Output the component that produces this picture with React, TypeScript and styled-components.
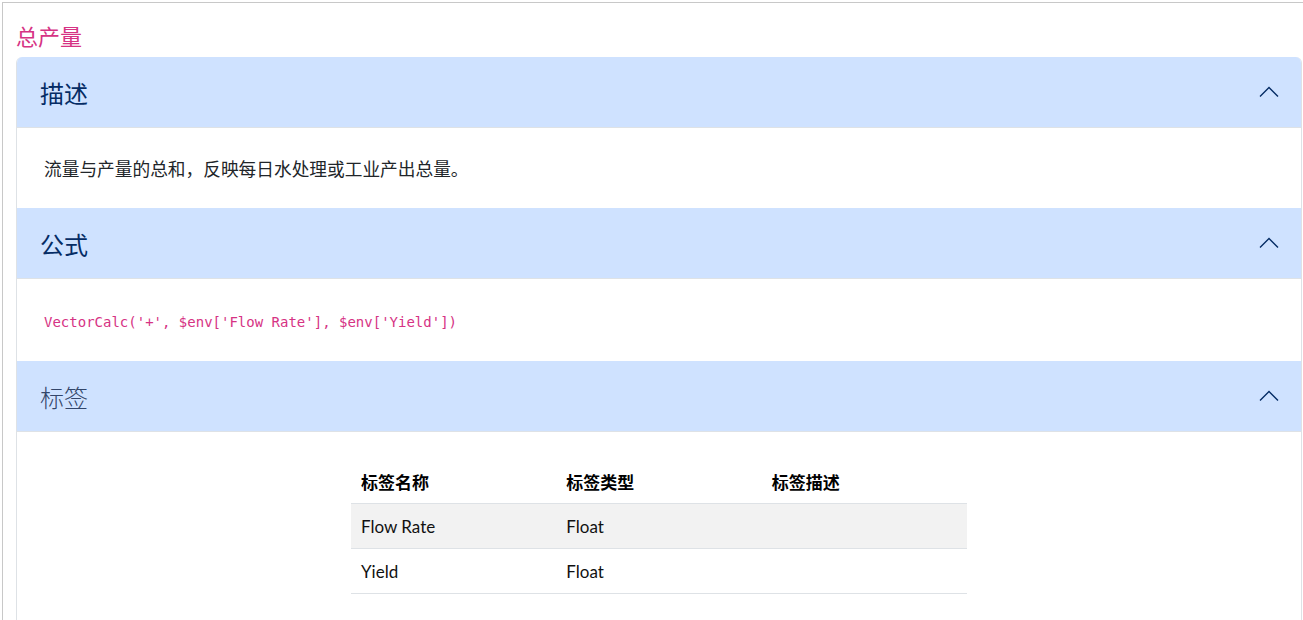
import React from 'react';
import styled, { createGlobalStyle } from 'styled-components';

const GlobalStyle = createGlobalStyle`
  html, body {
    margin: 0;
    padding: 0;
    background: #ffffff;
    overflow: hidden;
  }
  body {
    font-family: "Noto Sans", "Noto Sans CJK SC", sans-serif;
  }
`;

const Frame = styled.div`
  margin: 2px 0 0 2px;
  border-top: 1px solid #c8c8c8;
  border-left: 1px solid #c8c8c8;
  padding: 0 0 0 13px;
  min-height: 640px;
  box-sizing: border-box;
`;

const PageTitle = styled.h2`
  margin: 0;
  padding: 19px 0 8px;
  font-size: 22px;
  line-height: 27px;
  font-weight: 400;
  color: #d63384;
  font-family: "Noto Sans CJK SC", sans-serif;
`;

const Accordion = styled.div`
  width: 1284px;
  border: 1px solid #dee2e6;
  border-top: none;
  border-radius: 6px 6px 0 0;
  overflow: hidden;
`;

const Item = styled.section`
  display: flex;
  flex-direction: column;
`;

const Header = styled.button<{ $muted?: boolean }>`
  display: flex;
  align-items: center;
  justify-content: space-between;
  box-sizing: border-box;
  height: 71px;
  padding: 0 22px 0 23px;
  border: none;
  border-bottom: 1px solid #dee2e6;
  background: #cfe2ff;
  color: ${({ $muted }) => ($muted ? '#33466a' : '#052c65')};
  font-family: "Noto Sans CJK SC", sans-serif;
  font-size: 24px;
  font-weight: ${({ $muted }) => ($muted ? 300 : 400)};
  text-align: left;
  cursor: pointer;
`;

const Body = styled.div<{ $pad?: string }>`
  padding: ${({ $pad }) => $pad || '28px 27px'};
  border-bottom: 1px solid #dee2e6;
  &:last-child {
    border-bottom: none;
  }
`;

const Text = styled.p`
  margin: 0;
  font-size: 17.7px;
  line-height: 24px;
  color: #212529;
  font-family: "Noto Sans CJK SC", sans-serif;
`;

const Code = styled.code`
  display: block;
  font-family: "DejaVu Sans Mono", "Liberation Mono", monospace;
  font-size: 14px;
  line-height: 24px;
  color: #d63384;
`;

const Table = styled.table`
  width: 616px;
  margin: 0 auto 40px;
  border-collapse: collapse;
  table-layout: fixed;
`;

const Th = styled.th`
  text-align: left;
  padding: 0 10px;
  height: 43px;
  font-family: "Noto Sans CJK SC", sans-serif;
  font-size: 17px;
  font-weight: 700;
  color: #000;
  border-bottom: 1px solid #dee2e6;
`;

const Row = styled.tr<{ $striped?: boolean }>`
  background: ${({ $striped }) => ($striped ? '#f2f2f2' : '#ffffff')};
`;

const Td = styled.td`
  padding: 0 10px;
  height: 44px;
  font-family: Lato, "Noto Sans", sans-serif;
  font-size: 17px;
  color: #111;
  border-bottom: 1px solid #dee2e6;
`;

const Chevron = () => (
  <svg width="20" height="12" viewBox="0 0 20 12" fill="none">
    <polyline points="1,10.5 10,1.5 19,10.5" stroke="#052c65" strokeWidth="1.4" />
  </svg>
);

const tags = [
  { name: 'Flow Rate', type: 'Float', desc: '' },
  { name: 'Yield', type: 'Float', desc: '' },
];

export default function App() {
  return (
    <Frame>
      <GlobalStyle />
      <PageTitle>总产量</PageTitle>
      <Accordion>
        <Item>
          <Header>
            描述
            <Chevron />
          </Header>
          <Body>
            <Text>流量与产量的总和，反映每日水处理或工业产出总量。</Text>
          </Body>
        </Item>
        <Item>
          <Header>
            公式
            <Chevron />
          </Header>
          <Body $pad="31px 27px 27px">
            <Code>VectorCalc('+', $env['Flow Rate'], $env['Yield'])</Code>
          </Body>
        </Item>
        <Item>
          <Header $muted>
            标签
            <Chevron />
          </Header>
          <Body $pad="28px 26px 0">
            <Table>
              <thead>
                <tr>
                  <Th>标签名称</Th>
                  <Th>标签类型</Th>
                  <Th>标签描述</Th>
                </tr>
              </thead>
              <tbody>
                {tags.map((t, i) => (
                  <Row key={t.name} $striped={i % 2 === 0}>
                    <Td>{t.name}</Td>
                    <Td>{t.type}</Td>
                    <Td>{t.desc}</Td>
                  </Row>
                ))}
              </tbody>
            </Table>
          </Body>
        </Item>
      </Accordion>
    </Frame>
  );
}
